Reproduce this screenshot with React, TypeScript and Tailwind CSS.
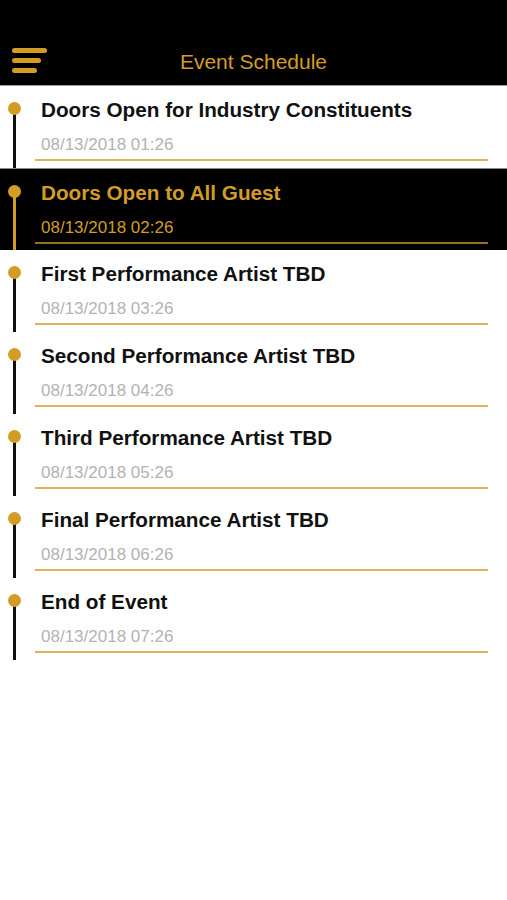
import React from 'react';

interface ScheduleItem {
  title: string;
  date: string;
}

const items: ScheduleItem[] = [
  { title: 'Doors Open for Industry Constituents', date: '08/13/2018 01:26' },
  { title: 'Doors Open to All Guest', date: '08/13/2018 02:26' },
  { title: 'First Performance Artist TBD', date: '08/13/2018 03:26' },
  { title: 'Second Performance Artist TBD', date: '08/13/2018 04:26' },
  { title: 'Third Performance Artist TBD', date: '08/13/2018 05:26' },
  { title: 'Final Performance Artist TBD', date: '08/13/2018 06:26' },
  { title: 'End of Event', date: '08/13/2018 07:26' },
];

const ACTIVE = 1;

const ScheduleRow: React.FC<{ item: ScheduleItem; active: boolean }> = ({ item, active }) => (
  <div className={`relative flex h-[82px] ${active ? 'bg-black border-t border-[#8a8a8a]' : 'bg-white'}`}>
    {/* timeline */}
    <div className="relative w-[35px] shrink-0">
      <div
        className={`absolute left-[12.5px] top-[23px] bottom-0 w-[3px] ${active ? 'bg-[#d39d25]' : 'bg-[#111]'}`}
      />
      <div className="absolute left-[7.5px] top-[16px] w-[13px] h-[13px] rounded-full bg-[#d39d25]" />
    </div>
    <div className="flex-1 pr-[19px]">
      <div className={`flex flex-col h-[75px] border-b-2 ${active ? 'border-[#94701f]' : 'border-[#e0b25a]'}`}>
        <div
          className={`pl-[6px] pt-[13px] text-[20.7px] font-bold leading-[22px] whitespace-nowrap ${active ? 'text-[#d39d25]' : 'text-[#111]'}`}
        >
          {item.title}
        </div>
        <div
          className={`pl-[6px] mt-[14px] text-[17px] leading-[20px] ${active ? 'text-[#d39d25]' : 'text-[#b3b3b3]'}`}
        >
          {item.date}
        </div>
      </div>
    </div>
  </div>
);

export default function App() {
  return (
    <div
      className="w-[507px] h-[900px] bg-white overflow-hidden"
      style={{ fontFamily: '"Liberation Sans", Arial, sans-serif' }}
    >
      <header className="relative h-[86px] bg-black flex items-end justify-center pb-[12px] border-b border-[#9a9a9a]">
        <div className="absolute left-[12px] top-[48px] flex flex-col gap-[5px]">
          <div className="w-[35px] h-[5px] rounded-full bg-[#d39d25]" />
          <div className="w-[29px] h-[5px] rounded-full bg-[#d39d25]" />
          <div className="w-[25px] h-[5px] rounded-full bg-[#d39d25]" />
        </div>
        <h1 className="text-[21px] leading-[22px] text-[#d39d25]">Event Schedule</h1>
      </header>
      <div className="flex flex-col">
        {items.map((item, i) => (
          <ScheduleRow key={item.title} item={item} active={i === ACTIVE} />
        ))}
      </div>
    </div>
  );
}
